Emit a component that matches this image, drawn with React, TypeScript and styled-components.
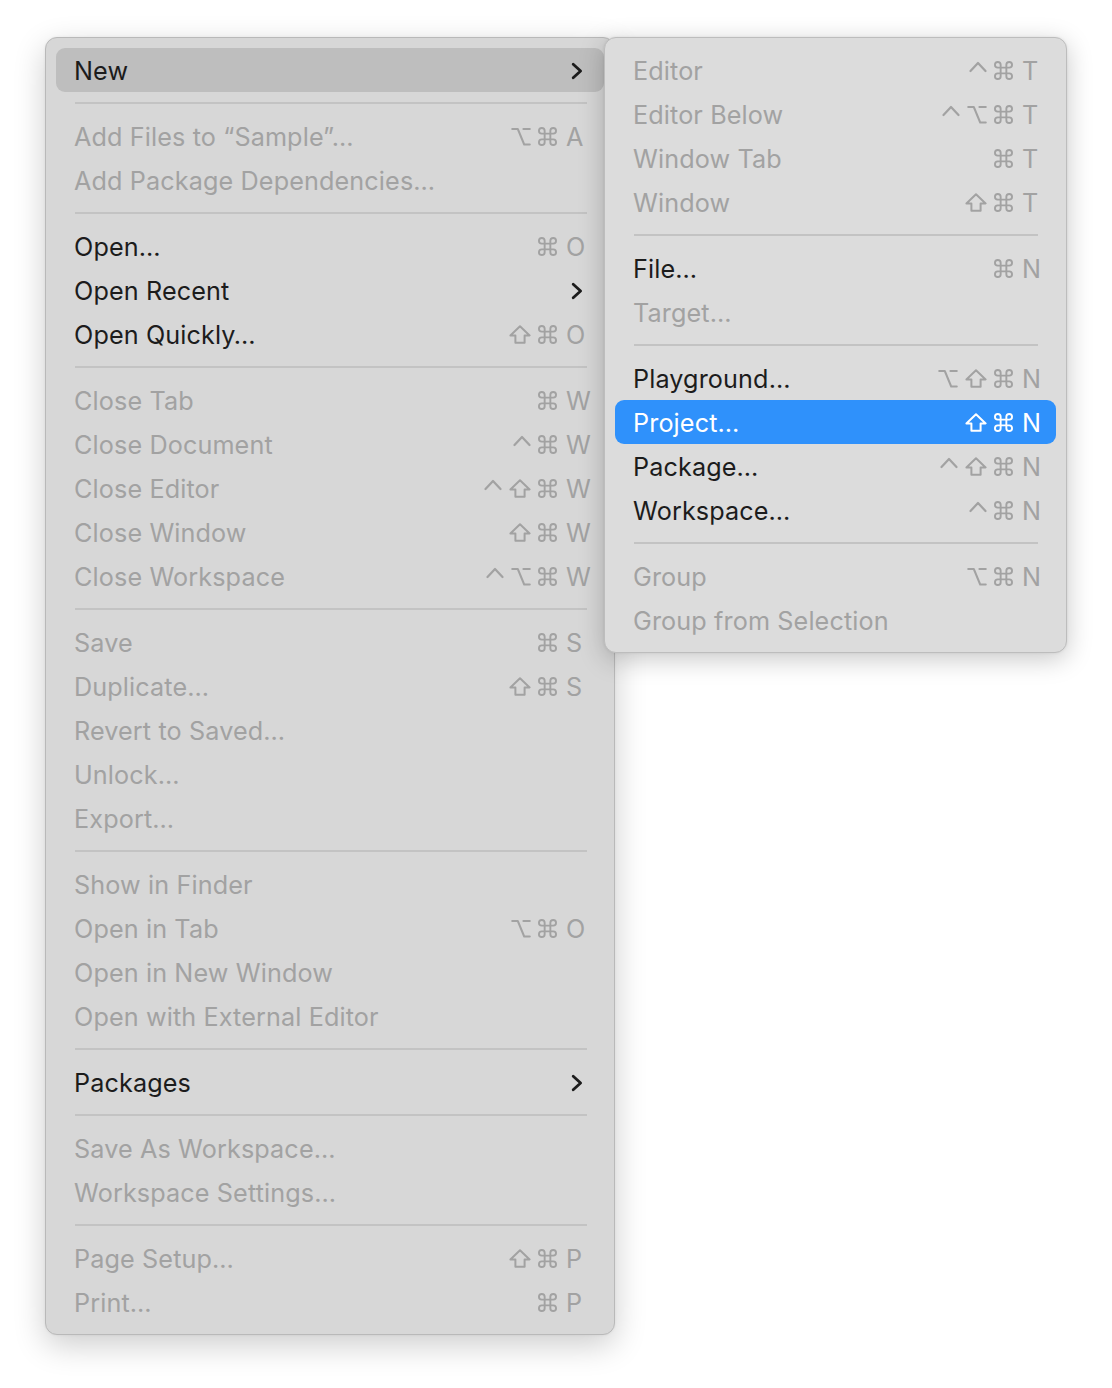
import React from "react";
import styled, { createGlobalStyle } from "styled-components";

const GlobalStyle = createGlobalStyle`
  html, body { margin: 0; padding: 0; background: #ffffff; }
  body { font-family: Inter, "Noto Sans", "Liberation Sans", sans-serif; -webkit-font-smoothing: antialiased; }
`;

type Mod = "ctrl" | "opt" | "shift" | "cmd";
type Entry =
  | { sep: true }
  | {
      sep?: false;
      label: string;
      enabled?: boolean;
      mods?: Mod[];
      keyChar?: string;
      submenu?: boolean;
      state?: "open" | "selected";
    };

const SEP: Entry = { sep: true };

const mainItems: Entry[] = [
  { label: "New", enabled: true, submenu: true, state: "open" },
  SEP,
  { label: "Add Files to “Sample”…", mods: ["opt", "cmd"], keyChar: "A" },
  { label: "Add Package Dependencies…" },
  SEP,
  { label: "Open…", enabled: true, mods: ["cmd"], keyChar: "O" },
  { label: "Open Recent", enabled: true, submenu: true },
  { label: "Open Quickly…", enabled: true, mods: ["shift", "cmd"], keyChar: "O" },
  SEP,
  { label: "Close Tab", mods: ["cmd"], keyChar: "W" },
  { label: "Close Document", mods: ["ctrl", "cmd"], keyChar: "W" },
  { label: "Close Editor", mods: ["ctrl", "shift", "cmd"], keyChar: "W" },
  { label: "Close Window", mods: ["shift", "cmd"], keyChar: "W" },
  { label: "Close Workspace", mods: ["ctrl", "opt", "cmd"], keyChar: "W" },
  SEP,
  { label: "Save", mods: ["cmd"], keyChar: "S" },
  { label: "Duplicate…", mods: ["shift", "cmd"], keyChar: "S" },
  { label: "Revert to Saved…" },
  { label: "Unlock…" },
  { label: "Export…" },
  SEP,
  { label: "Show in Finder" },
  { label: "Open in Tab", mods: ["opt", "cmd"], keyChar: "O" },
  { label: "Open in New Window" },
  { label: "Open with External Editor" },
  SEP,
  { label: "Packages", enabled: true, submenu: true },
  SEP,
  { label: "Save As Workspace…" },
  { label: "Workspace Settings…" },
  SEP,
  { label: "Page Setup…", mods: ["shift", "cmd"], keyChar: "P" },
  { label: "Print…", mods: ["cmd"], keyChar: "P" },
];

const subItems: Entry[] = [
  { label: "Editor", mods: ["ctrl", "cmd"], keyChar: "T" },
  { label: "Editor Below", mods: ["ctrl", "opt", "cmd"], keyChar: "T" },
  { label: "Window Tab", mods: ["cmd"], keyChar: "T" },
  { label: "Window", mods: ["shift", "cmd"], keyChar: "T" },
  SEP,
  { label: "File…", enabled: true, mods: ["cmd"], keyChar: "N" },
  { label: "Target…" },
  SEP,
  { label: "Playground…", enabled: true, mods: ["opt", "shift", "cmd"], keyChar: "N" },
  { label: "Project…", enabled: true, mods: ["shift", "cmd"], keyChar: "N", state: "selected" },
  { label: "Package…", enabled: true, mods: ["ctrl", "shift", "cmd"], keyChar: "N" },
  { label: "Workspace…", enabled: true, mods: ["ctrl", "cmd"], keyChar: "N" },
  SEP,
  { label: "Group", mods: ["opt", "cmd"], keyChar: "N" },
  { label: "Group from Selection" },
];

const Page = styled.div`
  display: flex;
  align-items: flex-start;
  padding: 37px 0 0 45px;
  min-height: 1388px;
  box-sizing: border-box;
`;

const MenuPanel = styled.div<{ $width: number; $sub?: boolean }>`
  position: relative;
  z-index: ${(p) => (p.$sub ? 2 : 1)};
  width: ${(p) => p.$width}px;
  margin-left: ${(p) => (p.$sub ? -11 : 0)}px;
  box-sizing: border-box;
  padding: 10px;
  background: ${(p) => (p.$sub ? "#dcdcdc" : "#d7d7d7")};
  border: 1px solid ${(p) => (p.$sub ? "#bdbdbd" : "#b9b9b9")};
  border-radius: 12px;
  box-shadow: ${(p) =>
    p.$sub
      ? "0 6px 26px rgba(0,0,0,0.22), 0 0 3px rgba(0,0,0,0.08)"
      : "0 10px 32px rgba(0,0,0,0.2), 0 0 3px rgba(0,0,0,0.06)"};
  display: flex;
  flex-direction: column;
`;

const Row = styled.div<{ $state?: "open" | "selected"; $enabled?: boolean; $pr: number }>`
  height: 44px;
  display: flex;
  align-items: center;
  padding: 1px ${(p) => p.$pr}px 0 18px;
  box-sizing: border-box;
  border-radius: 9px;
  font-size: 25.2px;
  letter-spacing: 0.12px;
  background: ${(p) =>
    p.$state === "selected" ? "#2f91fb" : p.$state === "open" ? "#bebebe" : "transparent"};
  color: ${(p) =>
    p.$state === "selected" ? "#ffffff" : p.$enabled ? "#1c1c1c" : "#a2a2a2"};
`;

const Label = styled.span`
  flex: 1;
  white-space: nowrap;
`;

const Mods = styled.span<{ $selected?: boolean }>`
  display: flex;
  align-items: center;
  gap: 7px;
  color: ${(p) => (p.$selected ? "#ffffff" : "#a2a2a2")};
`;

const KeyChar = styled.span<{ $selected?: boolean }>`
  width: 20px;
  margin-left: 9px;
  white-space: nowrap;
  letter-spacing: 0;
  color: ${(p) => (p.$selected ? "#ffffff" : "#a2a2a2")};
`;

const Chevron = styled.svg`
  display: block;
  margin-right: 3px;
  color: #1c1c1c;
`;

const Separator = styled.div<{ $inset: number }>`
  height: 22px;
  display: flex;
  align-items: center;
  padding: 0 ${(p) => p.$inset}px 0 19px;
  &::after {
    content: "";
    flex: 1;
    height: 2px;
    background: #c3c3c3;
  }
`;

const ModIcon = styled.svg`
  display: block;
  fill: none;
  stroke: currentColor;
  stroke-width: 2;
  stroke-linecap: round;
  stroke-linejoin: round;
`;

function ModGlyph({ m }: { m: Mod }) {
  if (m === "cmd")
    return (
      <ModIcon width={19} height={19} viewBox="2 2 20 20">
        <path d="M15 6v12a3 3 0 1 0 3-3H6a3 3 0 1 0 3 3V6a3 3 0 1 0-3 3h12a3 3 0 1 0-3-3" />
      </ModIcon>
    );
  if (m === "opt")
    return (
      <ModIcon width={20} height={19} viewBox="0 0 20 19">
        <path d="M1.2 2h5.6l6.4 15.5h5.6" />
        <path d="M12.4 2h6.4" />
      </ModIcon>
    );
  if (m === "shift")
    return (
      <ModIcon width={22} height={19} viewBox="0 0 22 19">
        <path d="M11 1.3 L20.6 10.4 H15.6 V17.8 H6.4 V10.4 H1.4 Z" />
      </ModIcon>
    );
  return (
    <ModIcon width={18} height={19} viewBox="0 0 18 19">
      <path d="M1.5 10 L9 2 L16.5 10" strokeWidth={2.2} />
    </ModIcon>
  );
}

function Menu({ items, width, sub, pr, sepInset }: { items: Entry[]; width: number; sub?: boolean; pr: number; sepInset: number }) {
  return (
    <MenuPanel $width={width} $sub={sub}>
      {items.map((it, i) => {
        if (it.sep) return <Separator key={i} $inset={sepInset} />;
        const selected = it.state === "selected";
        return (
          <Row key={i} $state={it.state} $enabled={it.enabled} $pr={pr}>
            <Label>{it.label}</Label>
            {it.mods && (
              <Mods $selected={selected}>
                {it.mods.map((m) => (
                  <ModGlyph key={m} m={m} />
                ))}
              </Mods>
            )}
            {it.keyChar && <KeyChar $selected={selected}>{it.keyChar}</KeyChar>}
            {it.submenu && (
              <Chevron width={12} height={18} viewBox="0 0 12 18">
                <path d="M2.2 2.2 L9.6 9 L2.2 15.8" fill="none" stroke="currentColor" strokeWidth={2.8} strokeLinecap="round" strokeLinejoin="round" />
              </Chevron>
            )}
          </Row>
        );
      })}
    </MenuPanel>
  );
}

export default function App() {
  return (
    <>
      <GlobalStyle />
      <Page>
        <Menu items={mainItems} width={570} pr={18} sepInset={17} />
        <Menu items={subItems} width={463} sub pr={14} sepInset={18} />
      </Page>
    </>
  );
}
